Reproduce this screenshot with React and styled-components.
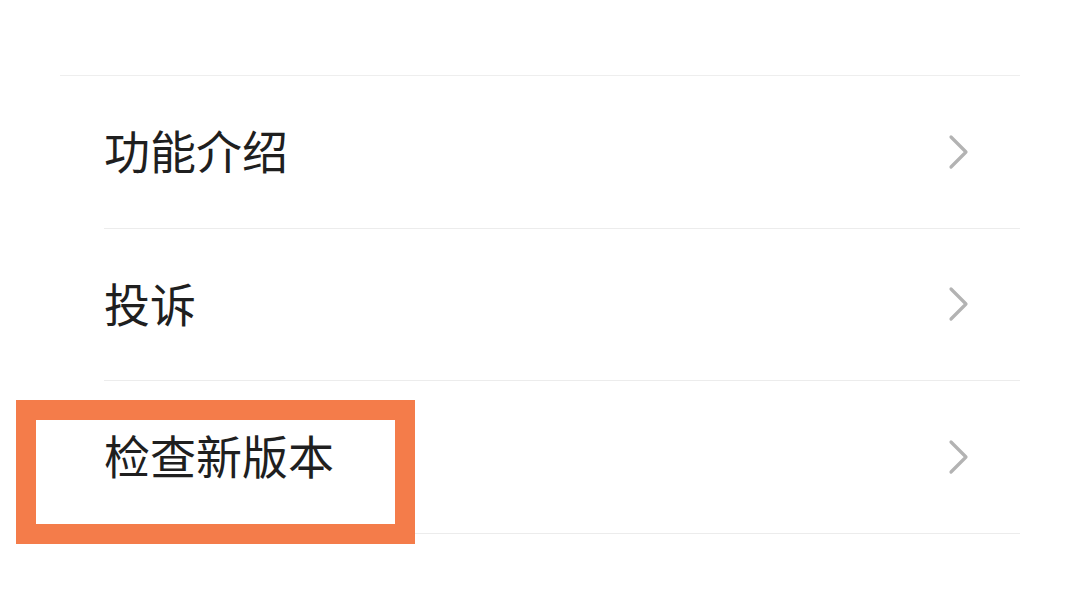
import React from "react";
import styled, { createGlobalStyle } from "styled-components";

const Global = createGlobalStyle`
  html, body { margin: 0; padding: 0; background: #ffffff; }
  body { font-family: "Noto Sans CJK SC", "Noto Sans", sans-serif; }
`;

const Page = styled.div`
  width: 1080px;
  height: 607px;
  padding-top: 75px;
  box-sizing: border-box;
  background: #ffffff;
  overflow: hidden;
`;

const TopDivider = styled.div`
  margin-left: 60px;
  width: 960px;
  height: 1px;
  background: #eeeeee;
`;

const List = styled.div`
  margin-left: 104px;
  width: 916px;
  display: flex;
  flex-direction: column;
`;

const Row = styled.div`
  position: relative;
  height: 152.5px;
  box-sizing: border-box;
  border-bottom: 1px solid #ececec;
  display: flex;
  align-items: center;
  justify-content: space-between;
  padding-right: 50px;
`;

const Label = styled.span`
  font-size: 46px;
  color: #1f1f1f;
  line-height: 1;
  margin-top: -5px;
`;

const Highlight = styled.div`
  position: absolute;
  left: -88px;
  top: 19px;
  width: 399px;
  height: 144px;
  box-sizing: border-box;
  border: 20px solid #f47c4a;
  pointer-events: none;
`;

const Chevron = () => (
  <svg width="22" height="36" viewBox="0 0 22 36" fill="none">
    <path
      d="M3 3 L18 18 L3 33"
      stroke="#b3b3b3"
      strokeWidth="3.2"
      strokeLinecap="round"
      strokeLinejoin="round"
    />
  </svg>
);

const items = [
  { label: "功能介绍" },
  { label: "投诉" },
  { label: "检查新版本", highlighted: true },
];

export default function App() {
  return (
    <Page>
      <Global />
      <TopDivider />
      <List>
        {items.map((it) => (
          <Row key={it.label}>
            <Label>{it.label}</Label>
            <Chevron />
            {it.highlighted && <Highlight />}
          </Row>
        ))}
      </List>
    </Page>
  );
}
